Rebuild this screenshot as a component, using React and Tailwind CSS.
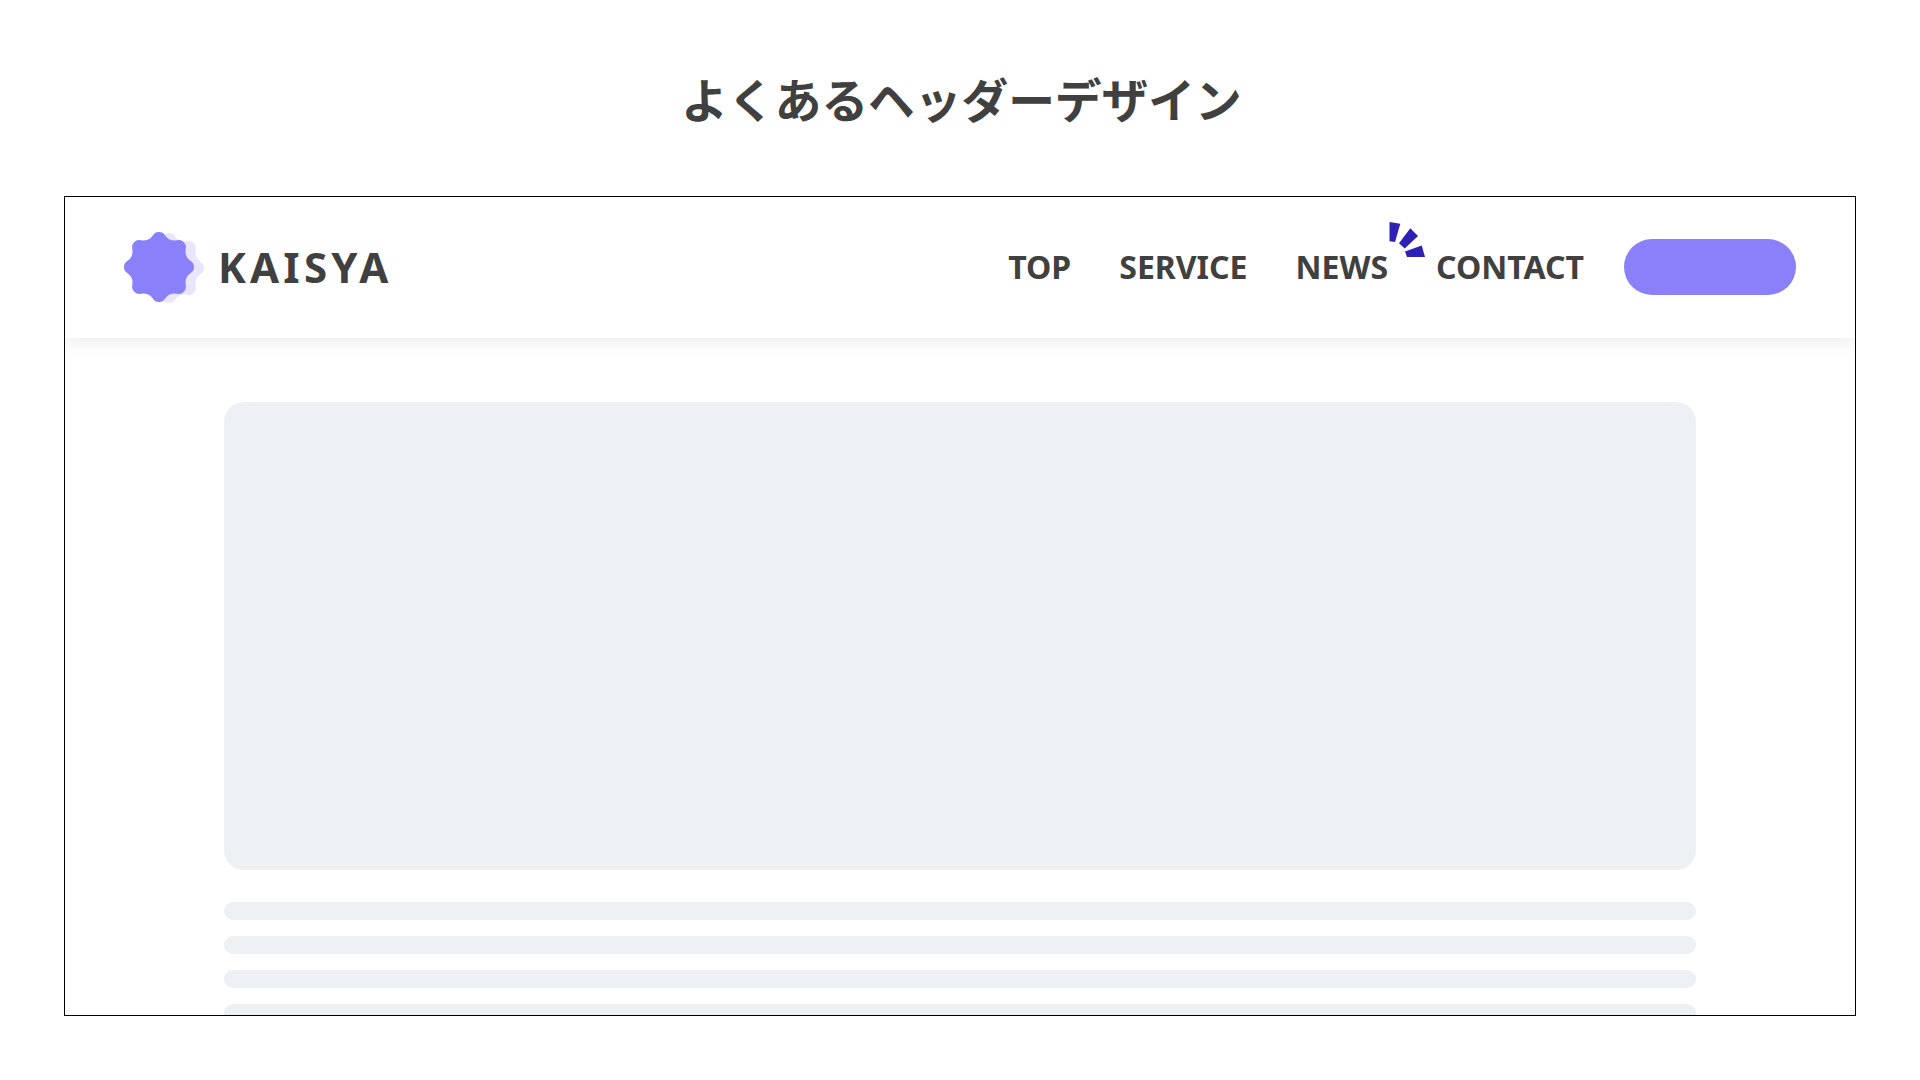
const polar = (r, a, t = 0) => [
    35 + r * Math.sin(a) + t * Math.cos(a),
    35 - r * Math.cos(a) + t * Math.sin(a),
];

// 8 round lobes joined by soft notches
const starPath = () => {
    const step = Math.PI / 8;
    const tip = 35;
    const notch = 29.5;
    const h = 6.5;
    let d = `M${polar(tip, 0).map((n) => n.toFixed(2)).join(' ')}`;
    for (let i = 0; i < 16; i++) {
        const a0 = i * step;
        const a1 = (i + 1) * step;
        const r0 = i % 2 === 0 ? tip : notch;
        const r1 = i % 2 === 0 ? notch : tip;
        const c = [...polar(r0, a0, h), ...polar(r1, a1, -h), ...polar(r1, a1)];
        d += `C${c.map((n) => n.toFixed(2)).join(' ')}`;
    }
    return `${d}Z`;
};

const star = starPath();

const Logo = () => (
    <svg width="80" height="72" viewBox="0 -1 80 72" className="block shrink-0">
        <path d={star} fill="#e8e6fd" transform="translate(10 1)" />
        <path d={star} fill="#8a80fa" />
    </svg>
);

const Accent = () => (
    <svg width="38" height="38" viewBox="0 0 38 38" className="absolute left-full top-[-23px]">
        <polygon points="1.5,2 12.3,3.7 7,22 1.5,21.3" fill="#301fb5" />
        <polygon points="22.3,8.2 30,16 16.7,28.5 11,23.3" fill="#301fb5" />
        <polygon points="33.7,25.5 37,37 19,37 17,31.5" fill="#301fb5" />
    </svg>
);

const App = () => {
    return (
        <div className="min-h-[1080px] bg-white pt-[63px] font-['Noto_Sans','Noto_Sans_CJK_JP',sans-serif] text-[#404040]">
            <h1 className="pl-[3px] text-center text-[46.7px] leading-[70px] font-bold font-['Noto_Sans_CJK_JP',sans-serif]">
                よくあるヘッダーデザイン
            </h1>
            <div className="mx-[64px] mt-[63px] h-[820px] overflow-hidden border border-black">
                <header className="relative flex h-[141px] items-center justify-between bg-white pb-[2px] pl-[59px] pr-[59px] shadow-[0_4px_16px_rgba(0,0,0,0.08)]">
                    <div className="flex items-center gap-[14px]">
                        <Logo />
                        <span className="text-[42px] font-bold tracking-[0.1em]">KAISYA</span>
                    </div>
                    <nav className="flex items-center">
                        <ul className="flex items-center gap-[48px] text-[32px] font-bold">
                            <li>TOP</li>
                            <li>SERVICE</li>
                            <li className="relative">
                                NEWS
                                <Accent />
                            </li>
                            <li>CONTACT</li>
                        </ul>
                        <div className="ml-[40px] h-[56px] w-[172px] rounded-full bg-[#8a80fa]" />
                    </nav>
                </header>
                <main className="mx-auto w-[1472px] pt-[64px]">
                    <div className="h-[468px] rounded-[20px] bg-[#eef1f4]" />
                    <div className="mt-[32px] flex flex-col gap-[16px]">
                        <div className="h-[18px] rounded-[9px] bg-[#eef1f4]" />
                        <div className="h-[18px] rounded-[9px] bg-[#eef1f4]" />
                        <div className="h-[18px] rounded-[9px] bg-[#eef1f4]" />
                        <div className="h-[18px] rounded-[9px] bg-[#eef1f4]" />
                    </div>
                </main>
            </div>
        </div>
    );
};

export default App;
